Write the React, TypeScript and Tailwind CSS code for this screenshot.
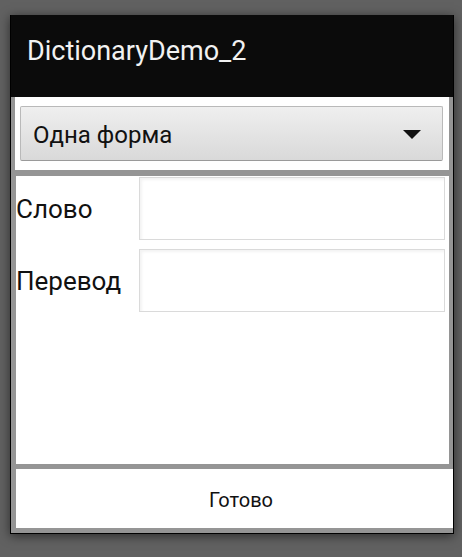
import React from "react";

export default function App() {
  return (
    <div className="w-[462px] h-[557px] bg-[#616161] pt-[15px] pl-[10px] font-['Roboto',sans-serif] overflow-hidden">
      <div className="w-[444px] h-[519px] bg-[#959595] border-x border-b border-black flex flex-col shadow-[0_2px_10px_rgba(0,0,0,0.55)]">
        <div className="h-[82px] bg-[#0b0b0b] flex items-center pl-[16px] pb-[9px]">
          <span className="text-[27px] text-[#f2f2f2] leading-none">DictionaryDemo_2</span>
        </div>
        <div className="h-[73px] ml-[4px] mr-[4px] bg-white pl-[5px] pr-[6px] py-[9px]">
          <div className="h-[55px] rounded-[2px] border border-[#b9b9b9] border-b-[#9a9a9a] bg-gradient-to-b from-[#efefef] to-[#d9d9d9] flex items-center justify-between pl-[12px] pr-[21px] pt-[2px]">
            <span className="text-[24px] text-[#111] leading-none">Одна форма</span>
            <svg width="18" height="9" viewBox="0 0 18 9">
              <polygon points="0,0 18,0 9,9" fill="#111" />
            </svg>
          </div>
        </div>
        <div className="h-[288px] mt-[6px] ml-[5px] mr-[4px] bg-white pt-[1px] pr-[4px] flex flex-col gap-[9px]">
          <div className="flex items-center h-[63px]">
            <span className="w-[123px] text-[26px] text-[#111] leading-none">Слово</span>
            <div className="flex-1 h-[63px] border border-[#dadada] bg-white shadow-[inset_2px_2px_3px_rgba(0,0,0,0.05)]" />
          </div>
          <div className="flex items-center h-[63px]">
            <span className="w-[123px] text-[26px] text-[#111] leading-none">Перевод</span>
            <div className="flex-1 h-[63px] border border-[#dadada] bg-white shadow-[inset_2px_2px_3px_rgba(0,0,0,0.05)]" />
          </div>
        </div>
        <div className="h-[59px] mt-[5px] ml-[5px] bg-white flex items-center justify-center pl-[13px] pt-[2px]">
          <span className="text-[20px] text-[#111] leading-none">Готово</span>
        </div>
      </div>
    </div>
  );
}
